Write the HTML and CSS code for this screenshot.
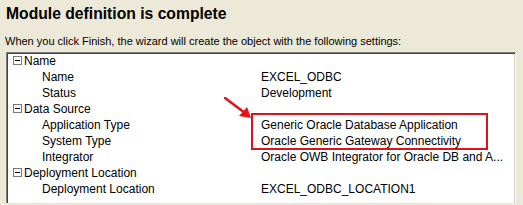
FILE: index.html
```html
<!DOCTYPE html>
<html>
<head>
<meta charset="utf-8">
<link rel="stylesheet" href="styles.css">
</head>
<body>
<div class="page">
  <h1 class="title">Module definition is complete</h1>
  <p class="subtitle">When you click Finish, the wizard will create the object with the following settings:</p>
  <div class="tree">
    <div class="row group"><span class="toggle"></span><span>Name</span></div>
    <div class="row item"><span class="label">Name</span><span class="value">EXCEL_ODBC</span></div>
    <div class="row item"><span class="label">Status</span><span class="value">Development</span></div>
    <div class="row group"><span class="toggle"></span><span>Data Source</span></div>
    <div class="row item"><span class="label">Application Type</span><span class="value">Generic Oracle Database Application</span></div>
    <div class="row item"><span class="label">System Type</span><span class="value">Oracle Generic Gateway Connectivity</span></div>
    <div class="row item"><span class="label">Integrator</span><span class="value">Oracle OWB Integrator for Oracle DB and A...</span></div>
    <div class="row group"><span class="toggle"></span><span>Deployment Location</span></div>
    <div class="row item"><span class="label">Deployment Location</span><span class="value">EXCEL_ODBC_LOCATION1</span></div>
  </div>
  <div class="highlight"></div>
  <svg class="arrow" width="40" height="34" viewBox="0 0 40 34">
    <line x1="1" y1="1" x2="21" y2="16" stroke="#e0141a" stroke-width="2.6" stroke-linecap="round"/>
    <polygon points="27,21 15,19 23,10" fill="#e0141a"/>
  </svg>
</div>
</body>
</html>
```
FILE: styles.css
```css
html, body {
  margin: 0;
  padding: 0;
  background: #ece9d8;
  overflow: hidden;
}
.page {
  position: relative;
  width: 523px;
  height: 205px;
  overflow: hidden;
  font-family: "Liberation Sans", Arial, sans-serif;
  color: #000;
}
.title {
  margin: 0;
  padding: 4px 0 0 6px;
  font-size: 15.7px;
  line-height: 20px;
  font-weight: bold;
}
.subtitle {
  margin: 11px 0 0 0;
  padding-left: 5px;
  font-size: 11px;
  line-height: 13px;
}
.tree {
  margin: 4px 0 0 6px;
  width: 506px;
  height: 149px;
  background: #fff;
  border-top: 1px solid #808080;
  border-left: 1px solid #808080;
  border-right: 1px solid #ffffff;
  border-bottom: 0;
  box-shadow: inset 1px 1px 0 #404040, inset -1px 0 0 #d4d0c8;
  padding: 1px 1px 0 1px;
  font-size: 12px;
}
.row {
  height: 16px;
  line-height: 14px;
  white-space: nowrap;
}
.group {
  display: flex;
  align-items: flex-start;
  padding-left: 5px;
}
.toggle {
  position: relative;
  box-sizing: border-box;
  width: 9px;
  height: 9px;
  margin: 2px 2px 0 0;
  border: 1px solid #7a7a7a;
  background: #fff;
}
.toggle::after {
  content: "";
  position: absolute;
  left: 1px;
  top: 3px;
  width: 5px;
  height: 1px;
  background: #000;
}
.item {
  display: grid;
  grid-template-columns: 219px 1fr;
  padding-left: 34px;
}
.highlight {
  position: absolute;
  left: 251px;
  top: 113px;
  width: 233px;
  height: 33px;
  border: 2px solid #dc1419;
}
.arrow {
  position: absolute;
  left: 224px;
  top: 97px;
}
```
